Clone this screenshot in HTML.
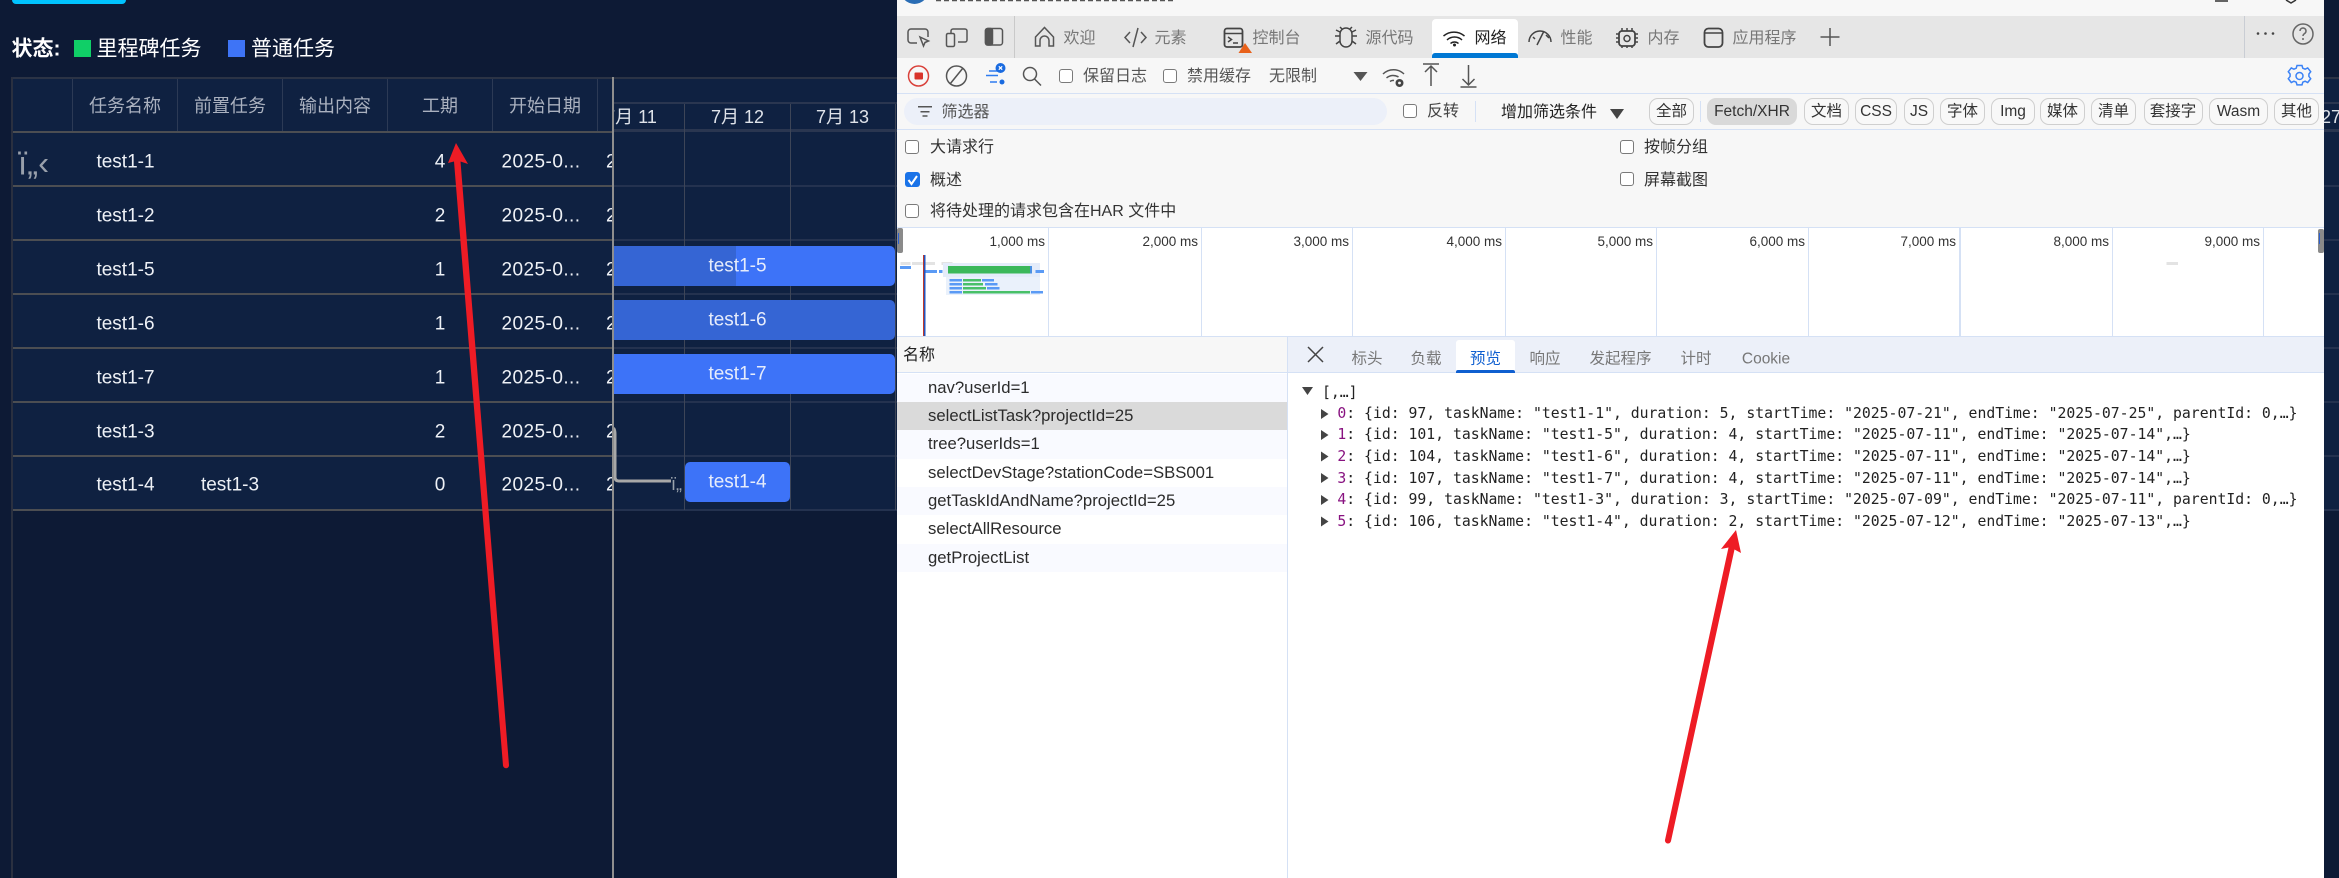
<!DOCTYPE html>
<html lang="zh"><head><meta charset="utf-8"><title>Gantt DevTools</title>
<style>
html,body{margin:0;padding:0;width:2339px;height:878px;overflow:hidden;background:#0d1a35}
body{position:relative;font-family:"Liberation Sans","Noto Sans CJK SC",sans-serif}
.a{position:absolute}
.t{position:absolute;white-space:nowrap;line-height:1;transform:translateY(-50%)}
.c{position:absolute;white-space:nowrap;line-height:1;transform:translate(-50%,-50%)}
.m{margin-top:1px}
.g{color:#eef1f6;font-size:19px;margin-top:1px}
.dt{letter-spacing:.45px}
.h{color:#aab1bf;font-size:18px;margin-top:1px}
.d{color:#dfe3ea;font-size:18px}
.bt{color:#e6ecfb;font-size:19px;margin-top:1px}
.tb{color:#777;font-size:16px;margin-top:1px;margin-left:.5px}
.o{color:#333;font-size:15.5px;margin-top:1px}
.chip{position:absolute;top:98px;height:25px;border:1px solid #cfcfcf;border-radius:9px;background:#f8f8f8;color:#333;font-size:15.5px;line-height:26px;text-align:center;white-space:nowrap}
.cb{position:absolute;width:12px;height:12px;border:1.5px solid #7a7a7a;border-radius:3px;background:#fff}
.ms{position:absolute;top:235px;width:100px;text-align:right;font-size:13.5px;line-height:14px;color:#333}
.rw{position:absolute;left:897px;width:390px;color:#2b2b2b;font-size:16.7px;line-height:28px;padding-left:31px;box-sizing:border-box;white-space:nowrap}
.j{position:absolute;left:1337.4px;font-family:"DejaVu Sans Mono",monospace;font-size:14.78px;line-height:18px;color:#222;white-space:pre;transform:translateY(-50%)}
.j b{font-weight:400;color:#881280}
.tab{color:#777;font-size:15.5px;margin-top:1px}
</style></head><body>

<!-- left app -->
<div class="a" style="left:12px;top:0;width:114px;height:4px;background:#00c3ff;border-radius:0 0 4px 4px"></div>
<div class="t m" style="left:11.5px;top:48px;color:#fff;font-size:21px;font-weight:700">状态:</div>
<div class="a" style="left:74px;top:40px;width:17px;height:17px;background:#10cf67"></div>
<div class="t m" style="left:96.5px;top:48px;color:#fff;font-size:21px">里程碑任务</div>
<div class="a" style="left:228px;top:40px;width:17px;height:17px;background:#3e74f6"></div>
<div class="t m" style="left:251px;top:48px;color:#fff;font-size:21px">普通任务</div>

<!-- backgrounds -->
<div class="a" style="left:13px;top:79px;width:600px;height:431px;background:#0f2141"></div>
<div class="a" style="left:614px;top:79px;width:1725px;height:431px;background:#0f2141"></div>
<div class="a" style="left:11px;top:77px;width:2328px;height:2px;background:#2b3345"></div>
<div class="a" style="left:11px;top:77px;width:2px;height:801px;background:#2a3040"></div>
<!-- table horizontal lines -->
<div class="a" style="left:13px;top:131px;width:600px;height:2px;background:#4c4e52"></div>
<div class="a" style="left:13px;top:185px;width:600px;height:2px;background:#4c4e52"></div>
<div class="a" style="left:13px;top:239px;width:600px;height:2px;background:#4c4e52"></div>
<div class="a" style="left:13px;top:293px;width:600px;height:2px;background:#4c4e52"></div>
<div class="a" style="left:13px;top:347px;width:600px;height:2px;background:#4c4e52"></div>
<div class="a" style="left:13px;top:401px;width:600px;height:2px;background:#4c4e52"></div>
<div class="a" style="left:13px;top:455px;width:600px;height:2px;background:#4c4e52"></div>
<div class="a" style="left:13px;top:509px;width:600px;height:2px;background:#4c4e52"></div>
<!-- header col lines -->
<div class="a" style="left:72px;top:79px;width:1px;height:52px;background:#2c3a55"></div>
<div class="a" style="left:177px;top:79px;width:1px;height:52px;background:#2c3a55"></div>
<div class="a" style="left:282px;top:79px;width:1px;height:52px;background:#2c3a55"></div>
<div class="a" style="left:387px;top:79px;width:1px;height:52px;background:#2c3a55"></div>
<div class="a" style="left:492px;top:79px;width:1px;height:52px;background:#2c3a55"></div>
<div class="a" style="left:597px;top:79px;width:1px;height:52px;background:#2c3a55"></div>
<!-- gantt grid -->
<div class="a" style="left:614px;top:102px;width:1725px;height:2px;background:#2a3650"></div>
<div class="a" style="left:614px;top:129px;width:1725px;height:3px;background:#2a3650"></div>
<div class="a" style="left:614px;top:185px;width:1725px;height:2px;background:#24324f"></div>
<div class="a" style="left:614px;top:239px;width:1725px;height:2px;background:#24324f"></div>
<div class="a" style="left:614px;top:293px;width:1725px;height:2px;background:#24324f"></div>
<div class="a" style="left:614px;top:347px;width:1725px;height:2px;background:#24324f"></div>
<div class="a" style="left:614px;top:401px;width:1725px;height:2px;background:#24324f"></div>
<div class="a" style="left:614px;top:455px;width:1725px;height:2px;background:#24324f"></div>
<div class="a" style="left:614px;top:509px;width:1725px;height:2px;background:#24324f"></div>
<div class="a" style="left:684px;top:104px;width:1px;height:406px;background:#3d4557"></div>
<div class="a" style="left:790px;top:104px;width:1px;height:406px;background:#3d4557"></div>
<div class="a" style="left:895px;top:104px;width:1px;height:406px;background:#3d4557"></div>

<!-- table header -->
<div class="c h" style="left:125px;top:105px">任务名称</div>
<div class="c h" style="left:230px;top:105px">前置任务</div>
<div class="c h" style="left:335px;top:105px">输出内容</div>
<div class="c h" style="left:440px;top:105px">工期</div>
<div class="c h" style="left:545px;top:105px">开始日期</div>
<!-- cells -->
<div class="t" style="left:18px;top:163px;color:#99a0ab;font-size:33px;font-weight:400">ï„‹</div>
<div class="c g" style="left:125.500px;top:161px">test1-1</div><div class="c g" style="left:440px;top:161px">4</div><div class="c g dt" style="left:541px;top:161px">2025-0...</div>
<div class="c g" style="left:125.500px;top:215px">test1-2</div><div class="c g" style="left:440px;top:215px">2</div><div class="c g dt" style="left:541px;top:215px">2025-0...</div>
<div class="c g" style="left:125.500px;top:269px">test1-5</div><div class="c g" style="left:440px;top:269px">1</div><div class="c g dt" style="left:541px;top:269px">2025-0...</div>
<div class="c g" style="left:125.500px;top:323px">test1-6</div><div class="c g" style="left:440px;top:323px">1</div><div class="c g dt" style="left:541px;top:323px">2025-0...</div>
<div class="c g" style="left:125.500px;top:377px">test1-7</div><div class="c g" style="left:440px;top:377px">1</div><div class="c g dt" style="left:541px;top:377px">2025-0...</div>
<div class="c g" style="left:125.500px;top:431px">test1-3</div><div class="c g" style="left:440px;top:431px">2</div><div class="c g dt" style="left:541px;top:431px">2025-0...</div>
<div class="c g" style="left:125.500px;top:484px">test1-4</div><div class="c g" style="left:230px;top:484px">test1-3</div><div class="c g" style="left:440px;top:484px">0</div><div class="c g dt" style="left:541px;top:484px">2025-0...</div>
<!-- clipped next column -->
<div class="a" style="left:606px;top:140px;width:7px;height:360px;overflow:hidden">
<div class="t g" style="left:0;top:21px">2</div><div class="t g" style="left:0;top:75px">2</div><div class="t g" style="left:0;top:129px">2</div><div class="t g" style="left:0;top:183px">2</div><div class="t g" style="left:0;top:237px">2</div><div class="t g" style="left:0;top:291px">2</div><div class="t g" style="left:0;top:344px">2</div>
</div>

<!-- gantt header dates -->
<div class="a" style="left:614px;top:104px;width:70px;height:26px;overflow:hidden"><div class="c d" style="left:17px;top:13px">7月 11</div></div>
<div class="c d" style="left:737.5px;top:117px">7月 12</div>
<div class="c d" style="left:842.5px;top:117px">7月 13</div>
<div class="t d" style="left:2321px;top:117px">27</div>

<!-- bars -->
<div class="a" style="left:614px;top:246px;width:281px;height:40px;background:#3d73f8;border-radius:0 5px 5px 0"></div>
<div class="a" style="left:614px;top:246px;width:122px;height:40px;background:#3565d4"></div>
<div class="c bt" style="left:737.5px;top:265px">test1-5</div>
<div class="a" style="left:614px;top:300px;width:281px;height:40px;background:#3565d4;border-radius:0 5px 5px 0"></div>
<div class="c bt" style="left:737.5px;top:319px">test1-6</div>
<div class="a" style="left:614px;top:354px;width:281px;height:40px;background:#3d73f8;border-radius:0 5px 5px 0"></div>
<div class="c bt" style="left:737.5px;top:373px">test1-7</div>
<div class="a" style="left:685px;top:462px;width:105px;height:40px;background:#3d73f8;border-radius:5px"></div>
<div class="c bt" style="left:737.5px;top:481px">test1-4</div>
<div class="t" style="left:671px;top:484px;color:#9aa3ad;font-size:18px">ï„</div>
<svg class="a" style="left:0;top:0" width="900" height="878">
<path d="M613.5 428 Q615 430 615 434 V477 Q615 481 619 481 H671" fill="none" stroke="#a8a8a8" stroke-width="3"/>
<rect x="612" y="77" width="2" height="801" fill="#8e8e8e"/>
</svg>

<!-- DEVTOOLS -->
<div class="a" style="left:897px;top:0;width:1427px;height:878px;background:#f7f7f7"></div>
<div class="a" style="left:897px;top:16px;width:1427px;height:42px;background:#e6e6e6"></div>
<div class="a" style="left:1432px;top:19px;width:86px;height:39px;background:#fff;border-radius:4px 4px 0 0"></div>
<div class="a" style="left:1432px;top:53px;width:86px;height:5px;background:#0078d4;border-radius:3px 3px 0 0"></div>
<div class="a" style="left:1014px;top:16px;width:1px;height:42px;background:#c9c9c9"></div>
<div class="a" style="left:2244px;top:16px;width:1px;height:42px;background:#c9cdd4"></div>
<div class="a" style="left:897px;top:93px;width:1427px;height:1px;background:#d5e1f5"></div>
<div class="a" style="left:897px;top:129px;width:1427px;height:1px;background:#d5e1f5"></div>
<div class="a" style="left:904px;top:98px;width:483px;height:27px;background:#ecf0f9;border-radius:14px"></div>
<div class="a" style="left:1475px;top:101px;width:1px;height:21px;background:#d5e1f5"></div>
<div class="a" style="left:1700px;top:101px;width:1px;height:21px;background:#d5e1f5"></div>
<!-- tab labels -->
<div class="t tb" style="left:1063px;top:38px">欢迎</div>
<div class="t tb" style="left:1154px;top:38px">元素</div>
<div class="t tb" style="left:1252px;top:38px">控制台</div>
<div class="t tb" style="left:1365px;top:38px">源代码</div>
<div class="t tb" style="left:1474px;top:38px;color:#222">网络</div>
<div class="t tb" style="left:1560px;top:38px">性能</div>
<div class="t tb" style="left:1647px;top:38px">内存</div>
<div class="t tb" style="left:1732px;top:38px">应用程序</div>
<!-- toolbar -->
<div class="cb" style="left:1059px;top:69px"></div>
<div class="t m" style="left:1083px;top:76px;color:#555;font-size:16px">保留日志</div>
<div class="cb" style="left:1163px;top:69px"></div>
<div class="t m" style="left:1187px;top:76px;color:#555;font-size:16px">禁用缓存</div>
<div class="t m" style="left:1269px;top:76px;color:#555;font-size:16px">无限制</div>
<!-- filter row -->
<div class="t m" style="left:941.5px;top:112px;color:#555;font-size:16px">筛选器</div>
<div class="cb" style="left:1403px;top:104px"></div>
<div class="t m" style="left:1427px;top:111px;color:#444;font-size:16px">反转</div>
<div class="t m" style="left:1501px;top:112px;color:#222;font-size:16px">增加筛选条件</div>
<div class="chip" style="left:1649px;width:43px">全部</div>
<div class="chip" style="left:1707px;width:90px;background:#d9d9d9;border:0;height:27px;line-height:27px">Fetch/XHR</div>
<div class="chip" style="left:1804px;width:43px">文档</div>
<div class="chip" style="left:1855px;width:40px">CSS</div>
<div class="chip" style="left:1904px;width:28px">JS</div>
<div class="chip" style="left:1940px;width:43px">字体</div>
<div class="chip" style="left:1991px;width:42px">Img</div>
<div class="chip" style="left:2040px;width:43px">媒体</div>
<div class="chip" style="left:2091px;width:43px">清单</div>
<div class="chip" style="left:2143.5px;width:57px">套接字</div>
<div class="chip" style="left:2209px;width:57px">Wasm</div>
<div class="chip" style="left:2274px;width:43px">其他</div>
<!-- options -->
<div class="cb" style="left:905px;top:140px"></div><div class="t o" style="left:930px;top:147px;font-size:16px">大请求行</div>
<div class="a" style="left:905px;top:172px;width:15px;height:15px;background:#1a73e8;border-radius:3px"></div>
<div class="t o" style="left:930px;top:180px;font-size:16px">概述</div>
<div class="cb" style="left:905px;top:204px"></div><div class="t o" style="left:930px;top:211px;font-size:16px">将待处理的请求包含在HAR 文件中</div>
<div class="cb" style="left:1620px;top:140px"></div><div class="t o" style="left:1644px;top:147px;font-size:16px">按帧分组</div>
<div class="cb" style="left:1620px;top:172px"></div><div class="t o" style="left:1644px;top:180px;font-size:16px">屏幕截图</div>
<!-- overview -->
<div class="a" style="left:897px;top:227px;width:1427px;height:110px;background:#fff;border-top:1px solid #d5e1f5;border-bottom:1px solid #d5e1f5;box-sizing:border-box"></div>
<div class="a" style="left:1048px;top:228px;width:1px;height:108px;background:#d5e1f5"></div>
<div class="a" style="left:1201px;top:228px;width:1px;height:108px;background:#d5e1f5"></div>
<div class="a" style="left:1352px;top:228px;width:1px;height:108px;background:#d5e1f5"></div>
<div class="a" style="left:1505px;top:228px;width:1px;height:108px;background:#d5e1f5"></div>
<div class="a" style="left:1656px;top:228px;width:1px;height:108px;background:#d5e1f5"></div>
<div class="a" style="left:1808px;top:228px;width:1px;height:108px;background:#d5e1f5"></div>
<div class="a" style="left:1959px;top:228px;width:2px;height:108px;background:#d5e1f5"></div>
<div class="a" style="left:2112px;top:228px;width:1px;height:108px;background:#d5e1f5"></div>
<div class="a" style="left:2263px;top:228px;width:1px;height:108px;background:#d5e1f5"></div>
<div class="ms" style="left:945px">1,000 ms</div>
<div class="ms" style="left:1098px">2,000 ms</div>
<div class="ms" style="left:1249px">3,000 ms</div>
<div class="ms" style="left:1402px">4,000 ms</div>
<div class="ms" style="left:1553px">5,000 ms</div>
<div class="ms" style="left:1705px">6,000 ms</div>
<div class="ms" style="left:1856px">7,000 ms</div>
<div class="ms" style="left:2009px">8,000 ms</div>
<div class="ms" style="left:2160px">9,000 ms</div>

<!-- network list -->
<div class="a" style="left:897px;top:337px;width:390px;height:36px;background:#f7f7f7;border-bottom:1px solid #d5e1f5;box-sizing:border-box"></div>
<div class="t m" style="left:903px;top:355px;color:#222;font-size:16px">名称</div>
<div class="a" style="left:897px;top:373px;width:390px;height:505px;background:#fff"></div>
<div class="rw" style="top:374px;background:#f9faff">nav?userId=1</div>
<div class="rw" style="top:402px;background:#dadada">selectListTask?projectId=25</div>
<div class="rw" style="top:430px;background:#f9faff;height:29px">tree?userIds=1</div>
<div class="rw" style="top:459px;background:#fff">selectDevStage?stationCode=SBS001</div>
<div class="rw" style="top:487px;background:#f9faff">getTaskIdAndName?projectId=25</div>
<div class="rw" style="top:515px;background:#fff;height:29px">selectAllResource</div>
<div class="rw" style="top:544px;background:#f9faff">getProjectList</div>
<!-- detail -->
<div class="a" style="left:1287px;top:337px;width:1037px;height:541px;background:#fff;border-left:1px solid #d5e1f5;box-sizing:border-box"></div>
<div class="a" style="left:1288px;top:337px;width:1036px;height:36px;background:#ecf0f9;border-bottom:1px solid #d5e1f5;box-sizing:border-box"></div>
<div class="a" style="left:1456px;top:340px;width:59px;height:33px;background:#fff;border-radius:3px 3px 0 0"></div>
<div class="a" style="left:1456px;top:370px;width:59px;height:3px;background:#0f5fd0;border-radius:2px 2px 0 0"></div>
<div class="c tab" style="left:1367px;top:358px">标头</div>
<div class="c tab" style="left:1426px;top:358px">负载</div>
<div class="c tab" style="left:1485.5px;top:358px;color:#0f5fd0">预览</div>
<div class="c tab" style="left:1545px;top:358px">响应</div>
<div class="c tab" style="left:1620.5px;top:358px">发起程序</div>
<div class="c tab" style="left:1696px;top:358px">计时</div>
<div class="c tab" style="left:1766px;top:358px">Cookie</div>
<!-- JSON -->
<div class="j" style="left:1322px;top:393px">[,…]</div>
<div class="j" style="top:414px"><b>0</b>: {id: 97, taskName: "test1-1", duration: 5, startTime: "2025-07-21", endTime: "2025-07-25", parentId: 0,…}</div>
<div class="j" style="top:435px"><b>1</b>: {id: 101, taskName: "test1-5", duration: 4, startTime: "2025-07-11", endTime: "2025-07-14",…}</div>
<div class="j" style="top:457px"><b>2</b>: {id: 104, taskName: "test1-6", duration: 4, startTime: "2025-07-11", endTime: "2025-07-14",…}</div>
<div class="j" style="top:479px"><b>3</b>: {id: 107, taskName: "test1-7", duration: 4, startTime: "2025-07-11", endTime: "2025-07-14",…}</div>
<div class="j" style="top:500px"><b>4</b>: {id: 99, taskName: "test1-3", duration: 3, startTime: "2025-07-09", endTime: "2025-07-11", parentId: 0,…}</div>
<div class="j" style="top:522px"><b>5</b>: {id: 106, taskName: "test1-4", duration: 2, startTime: "2025-07-12", endTime: "2025-07-13",…}</div>

<!-- icon overlay -->
<svg class="a" style="left:0;top:0" width="2339" height="878" fill="none" stroke="#555" stroke-width="1.5">
<!-- title bar remnants -->
<circle cx="914.500" cy="-10" r="14" fill="#2a6db5" stroke="none"/>
<path d="M936 .5H1174" stroke="#555" stroke-width="1.500" stroke-dasharray="5 3"/>
<path d="M2215 1H2228M2286 0l5 3 5-3" stroke="#333"/>
<!-- tab strip icons -->
<path d="M917 43H911a3 3 0 0 1-3-3V32a3 3 0 0 1 3-3H925a3 3 0 0 1 3 3V37"/><path d="M920 37L928.500 41 925 42.500 923.500 46Z"/>
<path d="M951 33V31a2 2 0 0 1 2-2H965a2 2 0 0 1 2 2V40a2 2 0 0 1-2 2H958"/><rect x="946.500" y="33.500" width="8" height="13" rx="1.500"/>
<rect x="985.500" y="28.500" width="17" height="16.500" rx="2.500"/><rect x="985.500" y="28.500" width="7" height="16.500" rx="2" fill="#555"/>
<path d="M1035.500 37L1044.500 27.500 1053.500 37V46H1049V40.500a4.500 4.500 0 0 0-9 0V46H1035.500Z"/>
<path d="M1130 32L1125 37.500 1130 43M1141 32L1146 37.500 1141 43M1138 28L1133 47"/>
<rect x="1224.500" y="28.500" width="18" height="18.500" rx="2.500" stroke="#444" stroke-width="1.800"/><path d="M1225 33.500H1242M1228 37L1231.500 39.500 1228 42M1233 43H1238" stroke="#444"/>
<path d="M1245 43L1252 53H1238.500Z" fill="#e8611a" stroke="none"/>
<path d="M1340 34a6 6 0 0 1 12 0V41a6 6 0 0 1-12 0ZM1342 29L1340 27M1350 29L1352 27M1340 36H1335M1352 36H1357M1340 41L1336 44M1352 41L1356 44M1340 32L1336 30M1352 32L1356 30" stroke="#444"/>
<path d="M1443.500 36a16 16 0 0 1 21 0M1447 40a11 11 0 0 1 15 0M1450.500 43.500a6 6 0 0 1 8 0" stroke="#222"/><circle cx="1454.500" cy="45" r="1.500" fill="#222" stroke="none"/>
<path d="M1529 42a11 11 0 0 1 22 0M1537 45L1544 31M1533 37L1535 39M1546 35L1549 38" stroke="#444"/>
<rect x="1619" y="31" width="16" height="15" rx="3" stroke="#444" stroke-width="1.800"/><circle cx="1627" cy="38.500" r="3" stroke="#444"/><path d="M1622 28V31M1627 28V31M1632 28V31M1622 46V48M1627 46V48M1632 46V48M1616 34H1619M1616 38H1619M1616 42H1619M1635 34H1638M1635 38H1638M1635 42H1638" stroke="#444"/>
<rect x="1704.500" y="28.500" width="18" height="18.500" rx="4" stroke="#444" stroke-width="1.800"/><path d="M1705 33H1722" stroke="#444"/>
<path d="M1830 28V46M1820.500 37H1839.500" stroke="#555"/>
<circle cx="2258" cy="33.500" r="1.300" fill="#444" stroke="none"/><circle cx="2265.500" cy="33.500" r="1.300" fill="#444" stroke="none"/><circle cx="2273" cy="33.500" r="1.300" fill="#444" stroke="none"/>
<circle cx="2303" cy="34" r="10" stroke="#666"/><path d="M2300 31a3 3 0 1 1 4.500 2.600c-1 .6-1.500 1.200-1.500 2.400" stroke="#666"/><circle cx="2303" cy="39" r="1" fill="#666" stroke="none"/>
<!-- toolbar icons -->
<circle cx="918.500" cy="76" r="10" stroke="#d9413a" stroke-width="1.500"/><rect x="914.500" y="72.500" width="8.500" height="7" rx="1" fill="#d9342b" stroke="none"/>
<circle cx="956.500" cy="76" r="10"/><path d="M950 84L963 68"/>
<path d="M989 71H998M986 75.500H998M990 82H997" stroke="#2f7cf0" stroke-width="1.500"/><circle cx="1000.500" cy="68" r="5" fill="#1a6be0" stroke="none"/><path d="M998.800 66.300L1002.200 69.700M1002.200 66.300L998.800 69.700" stroke="#fff" stroke-width="1.200"/><circle cx="1002" cy="82" r="2.500" fill="#1a6be0" stroke="none"/>
<circle cx="1030" cy="74" r="6.500"/><path d="M1034.500 79L1041 85.500"/>
<path d="M1353.500 72H1367.500L1360.500 81Z" fill="#555" stroke="none"/>
<path d="M1383 74a15 15 0 0 1 21 0M1386.500 78a10 10 0 0 1 12 -1M1390 81.500a5 5 0 0 1 4 -1"/><circle cx="1399.500" cy="83" r="4" fill="#444" stroke="none"/><circle cx="1399.500" cy="83" r="1.400" fill="#f7f7f7" stroke="none"/>
<path d="M1423 64H1439M1431 86V66M1425 72L1431 66 1437 72"/>
<path d="M1460.500 87H1476.500M1468.500 65V85M1462.500 79L1468.500 85 1474.500 79"/>
<g stroke="#3b82f6" stroke-width="1.500"><circle cx="2299.500" cy="76" r="3.500"/><path d="M2297 65.500h5l.8 2.700 2.300 1 2.600-1.300 3 3.800-1.800 2.300v2.400l1.800 2.300-3 3.800-2.600-1.300-2.300 1-.8 2.700h-5l-.8-2.700-2.300-1-2.600 1.300-3-3.800 1.800-2.300v-2.400l-1.800-2.300 3-3.800 2.600 1.300 2.300-1Z"/></g>
<!-- filter icon -->
<path d="M918 106.700H932M920.500 111.700H929.500M922.500 116H927.500"/>
<path d="M1610 109H1624L1617 119Z" fill="#444" stroke="none"/>
<path d="M908.500 180L911.500 184 917 176" stroke="#fff" stroke-width="2"/>
<!-- overview handles and bars -->
<rect x="897" y="228" width="6" height="25" rx="2" fill="#8a8a8a" stroke="none"/><rect x="898" y="233" width="1" height="11" fill="#2b5fd0" stroke="none"/>
<rect x="2318" y="229" width="6" height="24" rx="2" fill="#8a8a8a" stroke="none"/><rect x="2319" y="233" width="1" height="11" fill="#2b5fd0" stroke="none"/>
<g stroke="none">
<rect x="900.500" y="262" width="10" height="3" fill="#e3e3e3"/><rect x="912" y="262" width="23" height="3" fill="#e3e3e3"/><rect x="941.500" y="262" width="11" height="3" fill="#e3e3e3"/><rect x="2166.500" y="262" width="11.500" height="3" fill="#e3e3e3"/>
<rect x="900" y="266" width="11" height="3" fill="#5a9af5"/>
<rect x="925" y="270" width="12" height="3" fill="#5a9af5"/><rect x="939" y="270" width="3.500" height="3" fill="#5a9af5"/>
<rect x="943" y="263" width="97" height="14" fill="#e4ecfa"/>
<rect x="948" y="266" width="82" height="7.500" fill="#3bb85a"/><rect x="1030" y="266" width="2" height="7.500" fill="#4a90e2"/>
<rect x="1035.500" y="270" width="8.500" height="3" fill="#5a9af5"/>
<rect x="946" y="277" width="94" height="18" fill="#eaf1fb"/>
<rect x="949.500" y="279" width="12.500" height="2.500" fill="#5a9af5"/><rect x="963" y="279" width="18" height="2.500" fill="#48c068"/><rect x="982" y="279" width="12" height="2.500" fill="#5a9af5"/>
<rect x="949.500" y="283" width="12.500" height="2.500" fill="#5a9af5"/><rect x="963" y="283" width="20" height="2.500" fill="#48c068"/><rect x="985" y="283" width="12.500" height="2.500" fill="#5a9af5"/>
<rect x="949.500" y="287" width="12.500" height="2.500" fill="#5a9af5"/><rect x="963" y="287" width="23" height="2.500" fill="#48c068"/><rect x="987" y="287" width="12.500" height="2.500" fill="#5a9af5"/>
<rect x="949.500" y="291" width="12.500" height="2.500" fill="#5a9af5"/><rect x="963" y="291" width="67" height="2.500" fill="#48c068"/><rect x="1031" y="291" width="12" height="2.500" fill="#5a9af5"/>
<rect x="923" y="255" width="1" height="81" fill="#c0392b"/><rect x="924" y="255" width="1.500" height="81" fill="#2255c0"/>
</g>
<!-- detail X, triangles -->
<path d="M1308 347L1323 362M1323 347L1308 362" stroke="#444"/>
<g fill="#444" stroke="none">
<path d="M1302 387H1313L1307.500 395Z"/>
<path d="M1321 409V419L1328.500 414Z"/><path d="M1321 430V440L1328.500 435Z"/><path d="M1321 451.500V461.500L1328.500 456.500Z"/><path d="M1321 473V483L1328.500 478Z"/><path d="M1321 495V505L1328.500 500Z"/><path d="M1321 516.500V526.500L1328.500 521.500Z"/>
</g>
<!-- red arrows -->
<g fill="#ee1c25" stroke="none">
<path d="M456 143L468 164 460.500 161.500 509 765a3 3 0 0 1-6 .5L454 161.500 448 163Z"/>
<path d="M1736 530L1741 553 1734.500 549.500 1671 841a3 3 0 0 1-6-1L1728.500 547.500 1721 549Z"/>
</g>
</svg>
</body></html>
